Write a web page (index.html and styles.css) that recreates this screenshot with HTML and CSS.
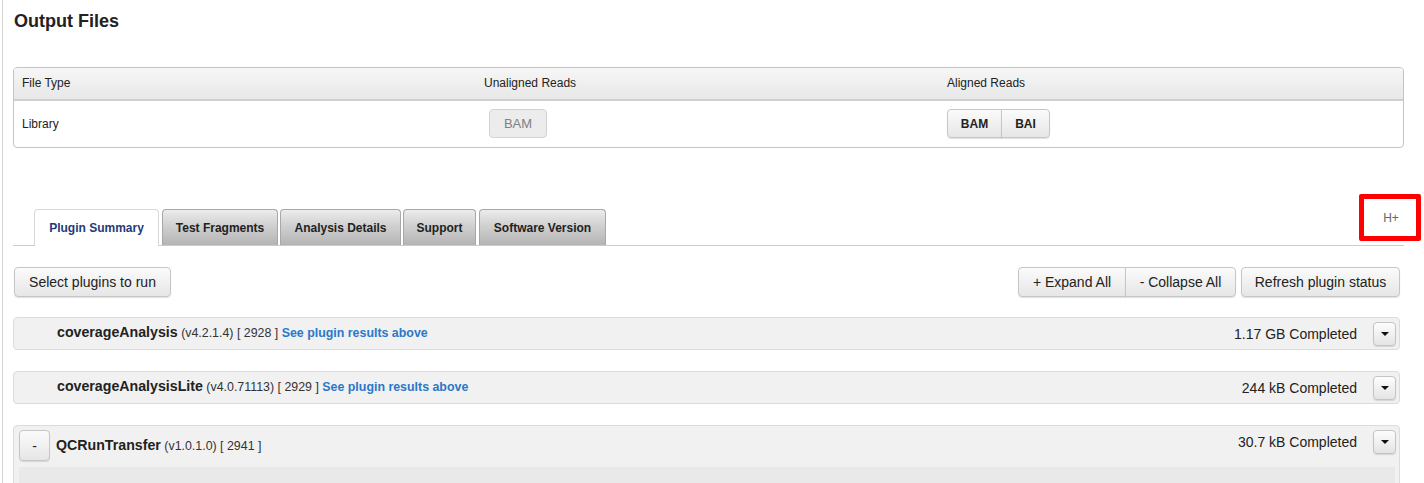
FILE: index.html
```html
<!DOCTYPE html>
<html>
<head>
<meta charset="utf-8">
<link rel="stylesheet" href="styles.css">
</head>
<body>
<div class="page">
  <h1 class="title">Output Files</h1>

  <div class="files">
    <div class="files-row files-head">
      <div class="col col-type">File Type</div>
      <div class="col col-unaligned">Unaligned Reads</div>
      <div class="col col-aligned">Aligned Reads</div>
    </div>
    <div class="files-row files-body">
      <div class="col col-type">Library</div>
      <div class="col col-unaligned"><span class="btn btn-disabled">BAM</span></div>
      <div class="col col-aligned">
        <span class="btn-group"><span class="btn btn-bold">BAM</span><span class="btn btn-bold">BAI</span></span>
      </div>
    </div>
  </div>

  <div class="tabbar">
    <div class="tab tab-active">Plugin Summary</div>
    <div class="tab">Test Fragments</div>
    <div class="tab">Analysis Details</div>
    <div class="tab">Support</div>
    <div class="tab">Software Version</div>
    <div class="hplus">H+</div>
  </div>

  <div class="actions">
    <span class="btn btn-lg">Select plugins to run</span>
    <div class="actions-right">
      <span class="btn-group"><span class="btn btn-lg">+ Expand All</span><span class="btn btn-lg">- Collapse All</span></span>
      <span class="btn btn-lg">Refresh plugin status</span>
    </div>
  </div>

  <div class="plugins">
    <div class="plugin">
      <div class="plugin-head plugin-indent">
        <div class="plugin-title"><b class="pname">coverageAnalysis</b> <span class="pmeta">(v4.2.1.4) [ 2928 ]</span> <span class="plink">See plugin results above</span></div>
        <div class="plugin-status">1.17 GB Completed</div>
        <span class="caret-btn"><span class="caret"></span></span>
      </div>
    </div>
    <div class="plugin">
      <div class="plugin-head plugin-indent">
        <div class="plugin-title"><b class="pname">coverageAnalysisLite</b> <span class="pmeta">(v4.0.71113) [ 2929 ]</span> <span class="plink">See plugin results above</span></div>
        <div class="plugin-status">244 kB Completed</div>
        <span class="caret-btn"><span class="caret"></span></span>
      </div>
    </div>
    <div class="plugin plugin-open">
      <div class="plugin-head plugin-head-tall">
        <span class="btn toggle">-</span>
        <div class="plugin-title"><b class="pname">QCRunTransfer</b> <span class="pmeta">(v1.0.1.0) [ 2941 ]</span></div>
        <div class="plugin-status">30.7 kB Completed</div>
        <span class="caret-btn"><span class="caret"></span></span>
      </div>
      <div class="plugin-body"></div>
    </div>
  </div>
</div>
</body>
</html>
```

FILE: styles.css
```css
html, body {
  margin: 0;
  padding: 0;
  background: #fff;
  height: 100%;
  overflow: hidden;
}
body {
  padding-left: 2px;
  font-family: "Liberation Sans", Arial, Helvetica, sans-serif;
  color: #222;
}
.page {
  position: relative;
  border-left: 1px solid #d4d4d4;
  min-height: 100%;
  padding: 0 20px 0 10px;
  box-sizing: border-box;
}
.title {
  margin: 0;
  padding-top: 11px;
  font-size: 18px;
  line-height: 20px;
  font-weight: bold;
  color: #222;
  padding-left: 1px;
}

/* files table */
.files {
  margin-top: 36px;
  border: 1px solid #c4c4c4;
  border-radius: 4px;
  overflow: hidden;
  font-size: 12px;
}
.files-row {
  display: flex;
  align-items: center;
}
.files-head {
  background: linear-gradient(#f6f6f6, #e8e8e8);
  border-bottom: 2px solid #cfcfcf;
  padding-bottom: 1px;
  box-sizing: border-box;
  height: 33px;
}
.files-body {
  height: 46px;
  padding-bottom: 1px;
  box-sizing: border-box;
}
.col-type { width: 462px; padding-left: 8px; }
.col-unaligned { width: 463px; }
.col-aligned { flex: 1; }
.files-body .col-unaligned { padding-left: 5px; width: 458px; }

.btn {
  display: inline-flex;
  align-items: center;
  justify-content: center;
  box-sizing: border-box;
  border: 1px solid #c6c6c6;
  border-radius: 4px;
  background: linear-gradient(#fbfbfb, #e6e6e6);
  box-shadow: 0 1px 1px rgba(0,0,0,0.12);
  color: #222;
  font-size: 13px;
}
.btn-disabled {
  width: 58px;
  height: 29px;
  color: #808080;
  background: #ececec;
  border-color: #d2d2d2;
  box-shadow: none;
  font-size: 13px;
}
.btn-group {
  display: inline-flex;
}
.btn-group .btn:not(:first-child) {
  border-top-left-radius: 0;
  border-bottom-left-radius: 0;
  margin-left: -1px;
}
.btn-group .btn:not(:last-child) {
  border-top-right-radius: 0;
  border-bottom-right-radius: 0;
}
.btn-bold {
  font-weight: bold;
  font-size: 12px;
  height: 29px;
  padding: 0 12px;
}
.btn-bold:first-child { width: 55px; }
.btn-bold:last-child { width: 49px; }

/* tabs */
.tabbar {
  margin-top: 61px;
  display: flex;
  align-items: flex-end;
  height: 36px;
  border-bottom: 1px solid #cccccc;
  padding-left: 21px;
  gap: 2px;
}
.tab {
  height: 36px;
  box-sizing: border-box;
  padding: 0 10px;
  display: flex;
  align-items: center;
  justify-content: center;
  font-size: 12px;
  font-weight: bold;
  color: #222;
  border: 1px solid #a8a8a8;
  border-bottom: none;
  border-radius: 4px 4px 0 0;
  background: linear-gradient(#ececec, #d0d0d0 45%, #b4b4b4);
}
.tab:nth-child(2) { width: 116px; margin-left: 1px; }
.tab:nth-child(3) { width: 121px; }
.tab:nth-child(4) { width: 73px; }
.tab:nth-child(5) { width: 127px; margin-left: 1px; }
.tab-active {
  width: 125px;
  background: #fff;
  color: #1f3a7a;
  border-color: #d8d8d8;
  height: 37px;
  margin-bottom: -1px;
}
.hplus {
  position: absolute;
  right: 3px;
  top: 194px;
  width: 62px;
  height: 47px;
  box-sizing: border-box;
  border: 5px solid #ff0000;
  border-radius: 2px;
  display: flex;
  align-items: center;
  justify-content: center;
  font-size: 12px;
  color: #666;
  padding-left: 2px;
}

/* actions */
.actions {
  margin-top: 21px;
  display: flex;
  justify-content: space-between;
  align-items: center;
  padding-left: 1px;
  padding-right: 4px;
}
.actions-right {
  display: flex;
  gap: 5px;
}
.btn-lg {
  height: 30px;
  padding: 0 10px;
  font-size: 14px;
}
.actions > .btn-lg { width: 157px; }
.actions-right .btn-group .btn:first-child { width: 108px; }
.actions-right .btn-group .btn:last-child { width: 111px; }
.actions-right > .btn-lg { width: 159px; }

/* plugins */
.plugins {
  margin-top: 20px;
  padding-right: 4px;
  display: flex;
  flex-direction: column;
  gap: 21px;
}
.plugin {
  background: #f1f1f1;
  border: 1px solid #dcdcdc;
  border-radius: 4px;
}
.plugin-head {
  display: flex;
  align-items: center;
  height: 31px;
  padding-right: 3px;
}
.plugin-indent {
  padding-left: 43px;
}
.plugin-head-tall {
  height: 40px;
  padding-left: 5px;
}
.plugin-title {
  flex: 1;
  font-size: 12.4px;
  color: #222;
  white-space: nowrap;
  margin-top: -4px;
}
.plugin-head-tall .plugin-title { margin-top: -3px; }
.pname {
  font-size: 14.2px;
  font-weight: bold;
  color: #222;
}
.pmeta { color: #333; }
.plink {
  color: #2a78c8;
  font-weight: bold;
}
.plugin-status {
  font-size: 14px;
  color: #222;
  margin-right: 16px;
}
.plugin-head-tall .plugin-status { margin-top: -9px; }
.caret-btn {
  width: 23px;
  height: 24px;
  box-sizing: border-box;
  border: 1px solid #c4c4c4;
  border-radius: 4px;
  background: linear-gradient(#fdfdfd, #e4e4e4);
  box-shadow: 0 1px 1px rgba(0,0,0,0.12);
  display: flex;
  align-items: center;
  justify-content: center;
}
.plugin-head-tall .caret-btn { margin-top: -8px; }
.caret {
  width: 0;
  height: 0;
  border-left: 4px solid transparent;
  border-right: 4px solid transparent;
  border-top: 4px solid #111;
}
.toggle {
  width: 31px;
  height: 31px;
  font-size: 14px;
  margin-right: 6px;
  margin-top: -1px;
}
.plugin-body {
  margin: 1px 4px 0 5px;
  height: 40px;
  background: #e9e9e9;
}
```
